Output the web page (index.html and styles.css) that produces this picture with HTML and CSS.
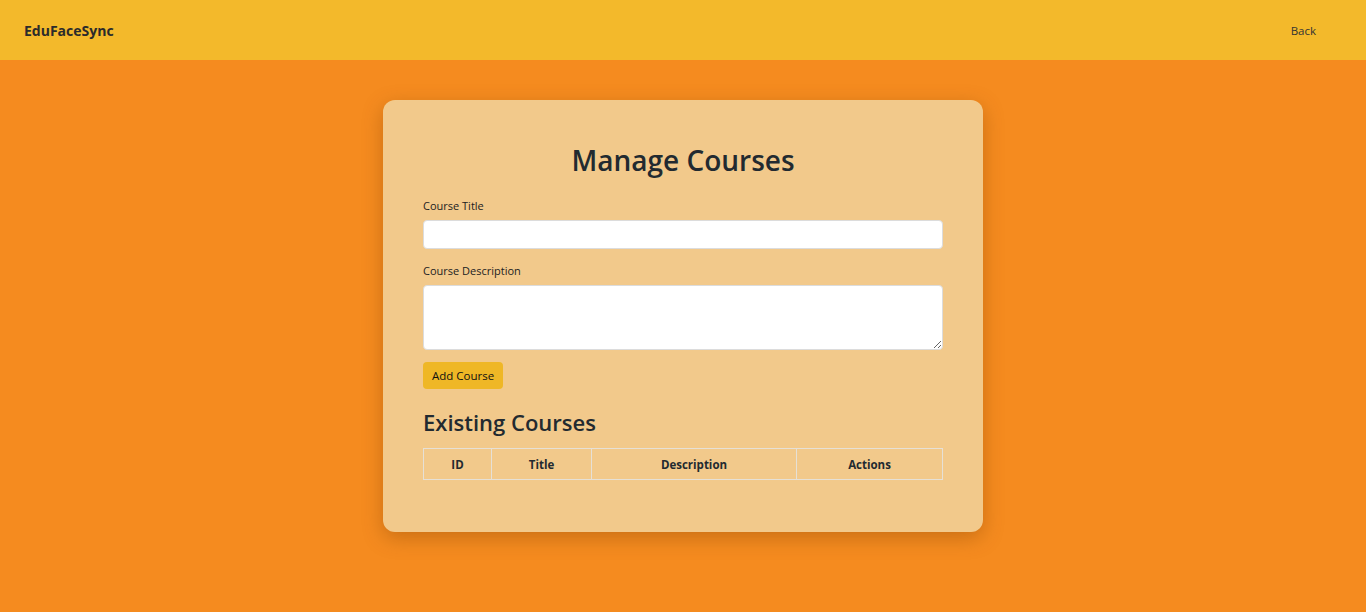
FILE: index.html
```html
<!DOCTYPE html>
<html lang="en">
<head>
<meta charset="utf-8">
<title>EduFaceSync - Manage Courses</title>
<link rel="stylesheet" href="styles.css">
</head>
<body>
<nav class="navbar">
  <span class="brand">EduFaceSync</span>
  <a class="back" href="#">Back</a>
</nav>
<main class="page">
  <section class="card">
    <h1 class="title">Manage Courses</h1>
    <form class="form">
      <label class="label" for="t">Course Title</label>
      <input class="input" id="t" type="text">
      <label class="label" for="d">Course Description</label>
      <textarea class="textarea" id="d"></textarea>
      <button class="btn" type="button">Add Course</button>
    </form>
    <h2 class="subtitle">Existing Courses</h2>
    <table class="table">
      <thead>
        <tr><th class="c-id">ID</th><th class="c-title">Title</th><th class="c-desc">Description</th><th>Actions</th></tr>
      </thead>
    </table>
  </section>
</main>
</body>
</html>
```
FILE: styles.css
```css
* { box-sizing: border-box; }
html, body { margin: 0; padding: 0; }
body {
  font-family: "Open Sans", "Noto Sans", "DejaVu Sans", sans-serif;
  background: #f58b1f;
  color: #212529;
  height: 612px;
}
.navbar {
  height: 60px;
  background: #f3b92b;
  display: flex;
  align-items: center;
  justify-content: space-between;
  padding: 0 50px 0 24px;
}
.brand { font-weight: 700; font-size: 14px; color: #2b2b2b; letter-spacing: 0; }
.back { font-size: 11.5px; color: #333; text-decoration: none; }
.page { display: flex; justify-content: center; padding-top: 40px; }
.card {
  width: 600px;
  background: #f2c98b;
  border-radius: 12px;
  padding: 40px 40px 52px;
  box-shadow: 0 6px 20px rgba(120, 60, 0, 0.35);
}
.title {
  margin: 0 0 18px;
  text-align: center;
  font-size: 28px;
  line-height: 40px;
  font-weight: 600;
  color: #222a30;
}
.form { display: flex; flex-direction: column; align-items: flex-start; }
.label { font-size: 11px; line-height: 16px; margin-bottom: 6px; color: #222; }
.input, .textarea {
  width: 100%;
  background: #fff;
  border: 1px solid #dcdcdc;
  border-radius: 4px;
  font: inherit;
}
.input { height: 29px; margin-bottom: 14px; }
.textarea { height: 65px; margin-bottom: 12px; resize: vertical; display: block; }
.btn {
  background: #efb726;
  border: none;
  border-radius: 4px;
  height: 27px;
  padding: 0 9px;
  font-family: inherit;
  font-size: 11.5px;
  color: #111;
}
.subtitle {
  margin: 18px 0 11px;
  font-size: 22px;
  line-height: 30px;
  font-weight: 600;
  color: #222a30;
}
.table { width: 100%; border-collapse: collapse; }
.table th {
  border: 1px solid #e6e0d6;
  height: 31px;
  font-size: 11.5px;
  font-weight: 700;
  color: #222a30;
  text-align: center;
}
.c-id { width: 68px; }
.c-title { width: 100px; }
.c-desc { width: 205px; }
```
